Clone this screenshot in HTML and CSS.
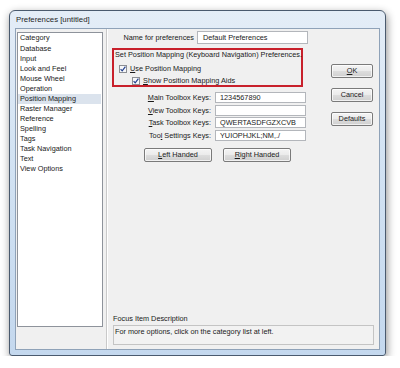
FILE: index.html
```html
<!DOCTYPE html>
<html>
<head>
<meta charset="utf-8">
<title>Preferences</title>
<link rel="stylesheet" href="styles.css">
</head>
<body>
<div class="window">
  <div class="titlebar">Preferences [untitled]</div>
  <div class="client">
    <div class="sidebar">
      <ul class="list">
        <li class="head">Category</li>
        <li>Database</li>
        <li>Input</li>
        <li>Look and Feel</li>
        <li>Mouse Wheel</li>
        <li>Operation</li>
        <li class="selected">Position Mapping</li>
        <li>Raster Manager</li>
        <li>Reference</li>
        <li>Spelling</li>
        <li>Tags</li>
        <li>Task Navigation</li>
        <li>Text</li>
        <li>View Options</li>
      </ul>
    </div>
    <div class="panel">
      <div class="top">
        <div class="form">
          <div class="name-row">
            <span class="name-label">Name for preferences</span>
            <div class="field name-field">Default Preferences</div>
          </div>
          <div class="group">
            <div class="group-title">Set Position Mapping (Keyboard Navigation) Preferences.</div>
            <div class="check-row level1">
              <span class="checkbox"><svg width="8" height="8" viewBox="0 0 8 8"><path d="M1.6 4.2 L3.2 5.9 L6.4 1.6" fill="none" stroke="#23408e" stroke-width="1.2"/></svg></span>
              <span><u>U</u>se Position Mapping</span>
            </div>
            <div class="check-row level2">
              <span class="checkbox"><svg width="8" height="8" viewBox="0 0 8 8"><path d="M1.6 4.2 L3.2 5.9 L6.4 1.6" fill="none" stroke="#23408e" stroke-width="1.2"/></svg></span>
              <span><u>S</u>how Position Mapping Aids</span>
            </div>
          </div>
          <div class="keys">
            <div class="key-row"><span class="key-label"><u>M</u>ain Toolbox Keys:</span><div class="field key-field">1234567890</div></div>
            <div class="key-row"><span class="key-label"><u>V</u>iew Toolbox Keys:</span><div class="field key-field"></div></div>
            <div class="key-row"><span class="key-label"><u>T</u>ask Toolbox Keys:</span><div class="field key-field">QWERTASDFGZXCVB</div></div>
            <div class="key-row"><span class="key-label">Too<u>l</u> Settings Keys:</span><div class="field key-field">YUIOPHJKL;NM,./</div></div>
          </div>
          <div class="hand-buttons">
            <div class="button wide"><u>L</u>eft Handed</div>
            <div class="button wide"><u>R</u>ight Handed</div>
          </div>
        </div>
        <div class="actions">
          <div class="button"><u>O</u>K</div>
          <div class="button">Cancel</div>
          <div class="button">Defaults</div>
        </div>
      </div>
      <div class="desc">
        <div class="desc-label">Focus Item Description</div>
        <div class="desc-box">For more options, click on the category list at left.</div>
      </div>
    </div>
  </div>
</div>
</body>
</html>
```
FILE: styles.css
```css
html, body {
  margin: 0;
  padding: 0;
  background: #ffffff;
}
body {
  font-family: "Liberation Sans", Arial, sans-serif;
  font-size: 7.3px;
  color: #1a1a1a;
}
.window {
  box-sizing: border-box;
  margin: 10px 0 0 9px;
  width: 377px;
  height: 346px;
  border: 1px solid #4a5a6e;
  border-radius: 6px 6px 3px 3px;
  background: linear-gradient(180deg, #e4edf7 0%, #d3e3f3 40%, #c4d8ee 100%);
  padding: 0 5px 5px 5px;
  display: flex;
  flex-direction: column;
  box-shadow: 1px 3px 8px rgba(0, 0, 0, 0.45);
}
.titlebar {
  height: 17px;
  line-height: 17px;
  padding-left: 1px;
  font-size: 7.8px;
  color: #1e1e1e;
}
.client {
  flex: 1;
  display: flex;
  background: #f0f0f0;
  border: 1px solid #8fa2b8;
}
.sidebar {
  width: 91px;
  padding: 3px 0 0 1px;
  box-sizing: border-box;
  border-right: 1px solid #c9c9c9;
}
.list {
  list-style: none;
  margin: 0;
  padding: 0;
  width: 86px;
  height: 295px;
  box-sizing: border-box;
  background: #ffffff;
  border: 1px solid #8e939b;
}
.list li {
  height: 10px;
  line-height: 10px;
  padding-left: 2px;
  white-space: nowrap;
}
.list li.head {
  height: 11px;
  line-height: 10px;
}
.list li.selected {
  background: #dbe3ed;
  margin-right: 1px;
}
.panel {
  flex: 1;
  display: flex;
  flex-direction: column;
  padding: 2px 0 4px 4px;
  border-left: 1px solid #ffffff;
}
.top {
  display: flex;
  flex: 1;
}
.form {
  width: 196px;
}
.field {
  box-sizing: border-box;
  background: #ffffff;
  border: 1px solid #b3b6bb;
  white-space: nowrap;
  overflow: hidden;
}
.name-row {
  display: flex;
  align-items: center;
  height: 13px;
}
.name-label {
  width: 82px;
  text-align: right;
}
.name-field {
  margin-left: 3px;
  width: 111px;
  height: 13px;
  line-height: 11px;
  padding-left: 5px;
}
.group {
  box-sizing: border-box;
  margin-top: 4px;
  width: 191px;
  height: 39px;
  border: 2px solid #c8202b;
  padding-left: 1px;
}
.group-title {
  height: 10px;
  line-height: 10px;
  white-space: nowrap;
}
.check-row {
  display: flex;
  align-items: center;
  height: 10px;
  gap: 3px;
}
.check-row.level1 {
  margin-top: 3.5px;
  padding-left: 4px;
}
.check-row.level2 {
  margin-top: 2px;
  padding-left: 17px;
}
.checkbox {
  box-sizing: border-box;
  width: 8px;
  height: 8px;
  border: 1px solid #8c8f94;
  background: #f6f7f9;
  display: flex;
  align-items: center;
  justify-content: center;
}
.checkbox svg {
  display: block;
  margin: -1px;
}
.keys {
  margin-top: 5px;
  display: flex;
  flex-direction: column;
  gap: 1.5px;
}
.key-row {
  display: flex;
  align-items: center;
  height: 11px;
}
.key-label {
  width: 99px;
  text-align: right;
  white-space: nowrap;
}
.key-field {
  margin-left: 4px;
  width: 91px;
  height: 11px;
  line-height: 9px;
  padding-left: 4px;
}
.hand-buttons {
  display: flex;
  gap: 11px;
  margin-top: 7.5px;
  padding-left: 32px;
}
.button {
  box-sizing: border-box;
  width: 42px;
  height: 14px;
  line-height: 12px;
  text-align: center;
  border: 1px solid #7a7a7a;
  border-radius: 2px;
  background: linear-gradient(180deg, #f4f4f4 0%, #ebebeb 48%, #dddddd 52%, #cfcfcf 100%);
  box-shadow: inset 0 0 0 1px rgba(255, 255, 255, 0.7);
  white-space: nowrap;
}
.button.wide {
  width: 68px;
}
.actions {
  margin-left: 23px;
  margin-top: 33px;
  display: flex;
  flex-direction: column;
  gap: 10px;
}
.desc {
  padding-left: 1px;
}
.desc-label {
  height: 10px;
  line-height: 10px;
  margin-bottom: 1px;
}
.desc-box {
  box-sizing: border-box;
  width: 261px;
  height: 20px;
  border: 1px solid #c4c4c4;
  background: #f2f2f2;
  padding: 1px 0 0 1px;
  line-height: 10px;
}
```
